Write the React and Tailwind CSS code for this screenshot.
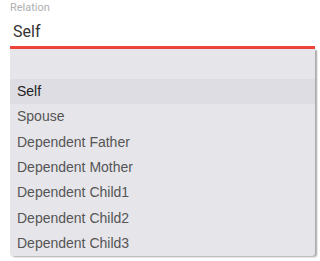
const options = [
  "Self",
  "Spouse",
  "Dependent Father",
  "Dependent Mother",
  "Dependent Child1",
  "Dependent Child2",
  "Dependent Child3",
];

export default function App() {
  return (
    <div className="w-[318px] h-[261px] bg-white overflow-hidden pt-[1px]">
      <div className="ml-[10px] w-[305px]">
        <div
          className="text-[11px] leading-[13px] text-[#b0b0b0]"
          style={{ fontFamily: "Roboto, sans-serif" }}
        >
          Relation
        </div>
        <div
          className="h-[32px] pl-[3px] pt-[8px] text-[16px] leading-[20px] text-[#333]"
          style={{ fontFamily: "Roboto, sans-serif" }}
        >
          Self
        </div>
        <div className="h-[3px] bg-[#f0433a]" />
        <div
          className="bg-[#e6e5ea] rounded-b-[3px] shadow-[2px_1px_2px_rgba(0,0,0,0.35)]"
          style={{ fontFamily: "'Liberation Sans', Arial, sans-serif" }}
        >
          <div className="h-[30px]" />
          {options.map((o, i) => (
            <div
              key={o}
              className={
                "h-[25.34px] flex items-center pl-[7px] text-[14px] " +
                (i === 0 ? "bg-[#dedde3] text-[#222]" : "text-[#555]")
              }
            >
              {o}
            </div>
          ))}
        </div>
      </div>
    </div>
  );
}
